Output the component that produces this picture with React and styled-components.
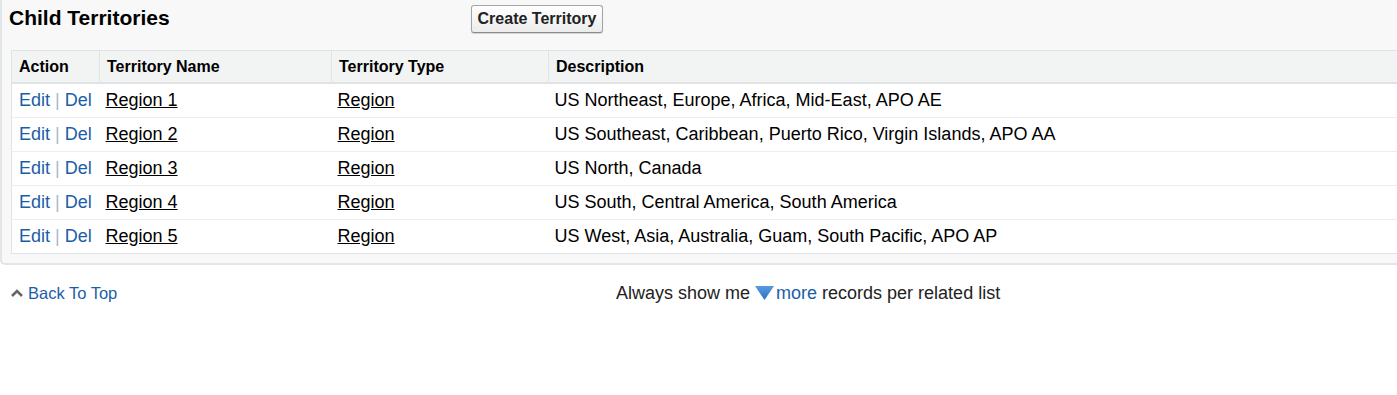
import React from 'react';
import styled, { createGlobalStyle } from 'styled-components';

const GlobalStyle = createGlobalStyle`
  body {
    margin: 0;
    font-family: "Liberation Sans", Arial, sans-serif;
    background: #fff;
    color: #000;
  }
`;

const Panel = styled.section`
  background: #f8f8f8;
  border-left: 2px solid #e3e6e8;
  border-bottom: 2px solid #e3e6e8;
  border-bottom-left-radius: 5px;
  padding: 5px 0 9px 9px;
`;

const PanelHead = styled.div`
  display: flex;
  align-items: center;
  height: 27px;
  margin-bottom: 18px;
`;

const Title = styled.h2`
  width: 462px;
  margin: -2px 0 0 -2px;
  font-size: 21px;
  font-weight: bold;
  color: #000;
`;

const Button = styled.button`
  font-family: "Liberation Sans", Arial, sans-serif;
  font-size: 16px;
  font-weight: bold;
  color: #222;
  height: 28px;
  width: 132px;
  padding: 0;
  border: 1px solid #a5a5a5;
  border-bottom-color: #8a8a8a;
  border-radius: 3px;
  background: linear-gradient(#ffffff, #ececec);
  box-shadow: 0 1px 1px rgba(0, 0, 0, 0.15);
  cursor: pointer;
`;

const Table = styled.table`
  width: 100%;
  border-collapse: collapse;
  background: #fff;
  border: 1px solid #e0e3e5;
  border-right: none;
  table-layout: fixed;
`;

const Th = styled.th`
  width: ${p => p.$w || 'auto'};
  height: 31px;
  padding: 0 0 0 7px;
  text-align: left;
  font-size: 16px;
  font-weight: bold;
  background: #f2f3f3;
  border-bottom: 2px solid #e0e3e5;
  border-left: ${p => (p.$first ? 'none' : '1px solid #e0e3e5')};
`;

const Tr = styled.tr`
  height: 34px;
  border-bottom: 1px solid #ededed;
  &:last-child {
    border-bottom: none;
  }
`;

const Td = styled.td`
  padding: 0 0 0 ${p => p.$pad || 7}px;
  font-size: 18px;
  white-space: nowrap;
  vertical-align: middle;
`;

const ActionLink = styled.a`
  color: #1a5ea8;
  text-decoration: none;
`;

const Sep = styled.span`
  color: #a7b9cf;
`;

const RecordLink = styled.a`
  color: #000;
  text-decoration: underline;
`;

const Footer = styled.div`
  display: flex;
  align-items: center;
  padding: 18px 0 0 11px;
  font-size: 18px;
`;

const BackTop = styled.a`
  display: flex;
  align-items: center;
  gap: 5px;
  width: 605px;
  font-size: 16.5px;
  color: #1a5ea8;
  text-decoration: none;
`;

const ShowMore = styled.div`
  display: flex;
  align-items: center;
  color: #222;
`;

const MoreLink = styled.a`
  color: #1a5ea8;
  text-decoration: none;
  margin-right: 5px;
`;

const rows = [
  ['Region 1', 'US Northeast, Europe, Africa, Mid-East, APO AE'],
  ['Region 2', 'US Southeast, Caribbean, Puerto Rico, Virgin Islands, APO AA'],
  ['Region 3', 'US North, Canada'],
  ['Region 4', 'US South, Central America, South America'],
  ['Region 5', 'US West, Asia, Australia, Guam, South Pacific, APO AP'],
];

export default function App() {
  return (
    <>
      <GlobalStyle />
      <Panel>
        <PanelHead>
          <Title>Child Territories</Title>
          <Button>Create Territory</Button>
        </PanelHead>
        <Table>
          <thead>
            <tr>
              <Th $first $w="80px">Action</Th>
              <Th $w="224px">Territory Name</Th>
              <Th $w="209px">Territory Type</Th>
              <Th>Description</Th>
            </tr>
          </thead>
          <tbody>
            {rows.map(([name, desc]) => (
              <Tr key={name}>
                <Td>
                  <ActionLink href="#">Edit</ActionLink>
                  <Sep> | </Sep>
                  <ActionLink href="#">Del</ActionLink>
                </Td>
                <Td $pad={6}>
                  <RecordLink href="#">{name}</RecordLink>
                </Td>
                <Td $pad={6}>
                  <RecordLink href="#">Region</RecordLink>
                </Td>
                <Td $pad={6}>{desc}</Td>
              </Tr>
            ))}
          </tbody>
        </Table>
      </Panel>
      <Footer>
        <BackTop href="#">
          <svg width="12" height="8" viewBox="0 0 12 8">
            <path d="M1 7 L6 2 L11 7" fill="none" stroke="#666" strokeWidth="2.6" />
          </svg>
          Back To Top
        </BackTop>
        <ShowMore>
          Always show me&nbsp;
          <svg width="19" height="14" viewBox="0 0 19 14" style={{ marginRight: 2 }}>
            <defs>
              <linearGradient id="tri" x1="0" y1="0" x2="0" y2="1">
                <stop offset="0" stopColor="#5a9ae0" />
                <stop offset="1" stopColor="#2a6fc0" />
              </linearGradient>
            </defs>
            <path d="M0 0 H19 L9.5 14 Z" fill="url(#tri)" />
          </svg>
          <MoreLink href="#">more</MoreLink>
          records per related list
        </ShowMore>
      </Footer>
    </>
  );
}
